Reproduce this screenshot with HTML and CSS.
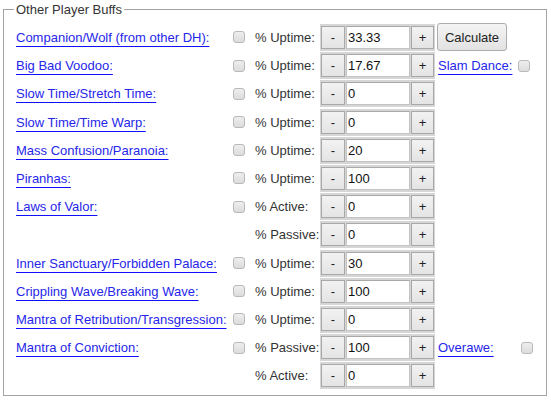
FILE: index.html
```html
<!DOCTYPE html>
<html>
<head>
<meta charset="utf-8">
<link rel="stylesheet" href="styles.css">
</head>
<body>
<fieldset class="buffs">
  <legend>Other Player Buffs</legend>
  <div class="grid">
    <a class="c1 name" href="#">Companion/Wolf (from other DH):</a>
    <span class="c2"><input type="checkbox" class="cb"></span>
    <span class="c3 pct">% Uptime:</span>
    <div class="c4 spin"><button class="minus">-</button><input class="val" value="33.33"><button class="plus">+</button></div>
    <span class="c5"><button class="calc">Calculate</button></span>

    <a class="c1 name" href="#">Big Bad Voodoo:</a>
    <span class="c2"><input type="checkbox" class="cb"></span>
    <span class="c3 pct">% Uptime:</span>
    <div class="c4 spin"><button class="minus">-</button><input class="val" value="17.67"><button class="plus">+</button></div>
    <a class="c5 name extra" href="#">Slam Dance:</a>
    <span class="c6"><input type="checkbox" class="cb"></span>

    <a class="c1 name" href="#">Slow Time/Stretch Time:</a>
    <span class="c2"><input type="checkbox" class="cb"></span>
    <span class="c3 pct">% Uptime:</span>
    <div class="c4 spin"><button class="minus">-</button><input class="val" value="0"><button class="plus">+</button></div>

    <a class="c1 name" href="#">Slow Time/Time Warp:</a>
    <span class="c2"><input type="checkbox" class="cb"></span>
    <span class="c3 pct">% Uptime:</span>
    <div class="c4 spin"><button class="minus">-</button><input class="val" value="0"><button class="plus">+</button></div>

    <a class="c1 name" href="#">Mass Confusion/Paranoia:</a>
    <span class="c2"><input type="checkbox" class="cb"></span>
    <span class="c3 pct">% Uptime:</span>
    <div class="c4 spin"><button class="minus">-</button><input class="val" value="20"><button class="plus">+</button></div>

    <a class="c1 name" href="#">Piranhas:</a>
    <span class="c2"><input type="checkbox" class="cb"></span>
    <span class="c3 pct">% Uptime:</span>
    <div class="c4 spin"><button class="minus">-</button><input class="val" value="100"><button class="plus">+</button></div>

    <a class="c1 name" href="#">Laws of Valor:</a>
    <span class="c2"><input type="checkbox" class="cb"></span>
    <span class="c3 pct">% Active:</span>
    <div class="c4 spin"><button class="minus">-</button><input class="val" value="0"><button class="plus">+</button></div>

    <span class="c3 pct">% Passive:</span>
    <div class="c4 spin"><button class="minus">-</button><input class="val" value="0"><button class="plus">+</button></div>

    <a class="c1 name" href="#">Inner Sanctuary/Forbidden Palace:</a>
    <span class="c2"><input type="checkbox" class="cb"></span>
    <span class="c3 pct">% Uptime:</span>
    <div class="c4 spin"><button class="minus">-</button><input class="val" value="30"><button class="plus">+</button></div>

    <a class="c1 name" href="#">Crippling Wave/Breaking Wave:</a>
    <span class="c2"><input type="checkbox" class="cb"></span>
    <span class="c3 pct">% Uptime:</span>
    <div class="c4 spin"><button class="minus">-</button><input class="val" value="100"><button class="plus">+</button></div>

    <a class="c1 name" href="#">Mantra of Retribution/Transgression:</a>
    <span class="c2"><input type="checkbox" class="cb"></span>
    <span class="c3 pct">% Uptime:</span>
    <div class="c4 spin"><button class="minus">-</button><input class="val" value="0"><button class="plus">+</button></div>

    <a class="c1 name" href="#">Mantra of Conviction:</a>
    <span class="c2"><input type="checkbox" class="cb"></span>
    <span class="c3 pct">% Passive:</span>
    <div class="c4 spin"><button class="minus">-</button><input class="val" value="100"><button class="plus">+</button></div>
    <a class="c5 name extra" href="#">Overawe:</a>
    <span class="c6 shift"><input type="checkbox" class="cb"></span>

    <span class="c3 pct">% Active:</span>
    <div class="c4 spin"><button class="minus">-</button><input class="val" value="0"><button class="plus">+</button></div>
  </div>
</fieldset>
</body>
</html>
```
FILE: styles.css
```css
html, body {
  margin: 0;
  padding: 0;
  background: #ffffff;
}
body {
  font-family: "Liberation Sans", Arial, sans-serif;
  font-size: 13px;
  color: #333333;
}
.buffs {
  margin: 2px 4px 0 3px;
  padding: 6px 10px 6px 12px;
  border: 1px solid #a3a3a3;
  min-width: 0;
}
.buffs legend {
  padding: 0 2px;
  margin-left: -2px;
  color: #333333;
  font-size: 13px;
  line-height: 15px;
}
.grid {
  display: grid;
  grid-template-columns: 218px 18px 68px 115px 80px 20px;
  grid-template-rows: 28px;
  grid-auto-rows: 27px;
  row-gap: 1.2px;
  align-items: center;
}
.c1 { grid-column: 1; }
.c2 { grid-column: 2; }
.c3 { grid-column: 3; }
.c4 { grid-column: 4; }
.c5 { grid-column: 5; }
.c6 { grid-column: 6; }
.c2, .c6 {
  display: flex;
  align-items: center;
}
.name {
  justify-self: start;
  color: #2626ea;
  text-decoration: underline;
  text-decoration-color: #1010ff;
  text-underline-offset: 4px;
  text-decoration-thickness: 1px;
  white-space: nowrap;
}
.extra {
  margin-left: 3px;
}
.pct {
  padding-left: 3px;
  color: #333333;
  white-space: nowrap;
}
.cb {
  appearance: none;
  -webkit-appearance: none;
  margin: 0 0 0 -1px;
  width: 12px;
  height: 12px;
  border: 1px solid #b9b9b9;
  border-radius: 3px;
  background: linear-gradient(#eeeeee, #dcdcdc);
  box-sizing: border-box;
}
.c6 .cb {
  margin-left: 3px;
}
.shift .cb {
  margin-left: 6px;
}
.spin {
  display: flex;
  gap: 1px;
  height: 27px;
  box-sizing: border-box;
  padding: 2px 1px;
  background: #d6d6d6;
}
.spin button {
  height: 23px;
  margin: 0;
  padding: 0;
  border: 1px solid #a8a8a8;
  background: linear-gradient(#f2f2f2, #e4e4e4);
  font-family: "Liberation Sans", Arial, sans-serif;
  font-size: 13px;
  color: #222222;
  box-sizing: border-box;
}
.spin .minus {
  width: 24px;
}
.spin .plus {
  width: 23px;
}
.spin .val {
  width: 64px;
  height: 23px;
  margin: 0;
  padding: 0 1px;
  border: 1px solid #c4c4c4;
  border-top-color: #a9a9a9;
  background: #ffffff;
  font-family: "Liberation Sans", Arial, sans-serif;
  font-size: 13px;
  color: #111111;
  box-sizing: border-box;
  outline: none;
}
.calc {
  margin: 0 0 0 2px;
  height: 28px;
  width: 70px;
  padding: 0;
  border: 1px solid #adadad;
  border-radius: 3px;
  background: linear-gradient(#f4f4f4, #e2e2e2);
  font-family: "Liberation Sans", Arial, sans-serif;
  font-size: 13px;
  color: #222222;
  box-sizing: border-box;
}
```
